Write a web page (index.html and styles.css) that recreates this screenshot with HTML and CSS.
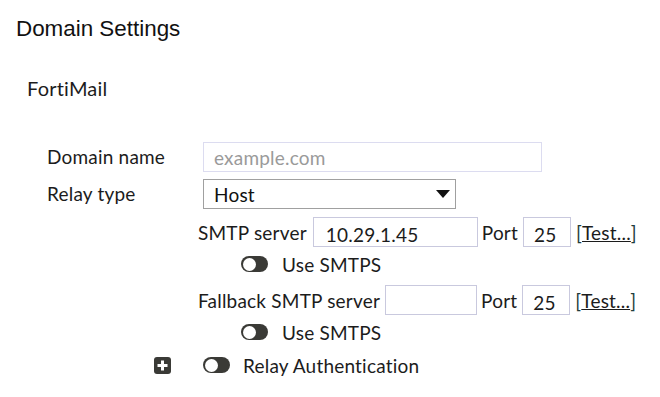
FILE: index.html
```html
<!DOCTYPE html>
<html lang="en">
<head>
    <meta charset="UTF-8">
    <title>Domain Settings</title>
    <link rel="stylesheet" href="styles.css">
</head>
<body>
<div class="page">
    <h1 class="title">Domain Settings</h1>
    <div class="product">FortiMail</div>

    <div class="form">
        <div class="row">
            <label class="label" for="domainName">Domain name</label>
            <input class="field wide" type="text" id="domainName" placeholder="example.com">
        </div>
        <div class="row row-select">
            <label class="label">Relay type</label>
            <div class="select">
                <span>Host</span>
                <svg width="14" height="8" viewBox="0 0 14 8"><path d="M0 0 H14 L7 8 Z" fill="#111"/></svg>
            </div>
        </div>

        <div class="relay">
            <div class="server-row">
                <span class="server-label">SMTP server</span>
                <input class="field host" type="text" value="10.29.1.45">
                <span class="port-label">Port</span>
                <input class="field port" type="text" value="25">
                <span class="test">[<a href="#">Test...</a>]</span>
            </div>
            <div class="toggle-row">
                <span class="toggle"></span>
                <span>Use SMTPS</span>
            </div>
            <div class="server-row">
                <span class="server-label fallback-label">Fallback SMTP server</span>
                <input class="field fallback" type="text" value="">
                <span class="port-label">Port</span>
                <input class="field port" type="text" value="25">
                <span class="test">[<a href="#">Test...</a>]</span>
            </div>
            <div class="toggle-row">
                <span class="toggle"></span>
                <span>Use SMTPS</span>
            </div>
        </div>

        <div class="auth-row">
            <span class="plus">
                <svg width="17" height="17" viewBox="0 0 17 17">
                    <rect width="17" height="17" rx="3" fill="#3a3a36"/>
                    <path d="M8.5 3.5 V13.5 M3.5 8.5 H13.5" stroke="#fff" stroke-width="3"/>
                </svg>
            </span>
            <span class="toggle"></span>
            <span>Relay Authentication</span>
        </div>
    </div>
</div>
</body>
</html>
```

FILE: styles.css
```css
body {
    margin: 0;
    background-color: #fff;
    font-family: Lato, 'Liberation Sans', sans-serif;
    font-size: 19px;
    letter-spacing: 0.2px;
    color: #1c1c1c;
}

.page {
    padding: 16px 0 0 16px;
}

.title {
    margin: 0;
    font-family: 'Liberation Sans', Arial, sans-serif;
    font-size: 22.4px;
    font-weight: normal;
    letter-spacing: 0;
    line-height: 25px;
    color: #111;
}

.product {
    margin: 35px 0 0 11px;
    font-size: 20px;
    line-height: 24px;
}

.form {
    margin: 42px 0 0 31px;
}

.row {
    display: flex;
    align-items: center;
    height: 30px;
}

.row-select {
    margin-top: 7px;
}

.label {
    width: 156px;
    line-height: 22px;
}

.field {
    box-sizing: border-box;
    height: 30px;
    margin: 0;
    padding: 4px 10px 0;
    border: 1px solid #c9c9de;
    border-radius: 0;
    font-family: Lato, 'Liberation Sans', sans-serif;
    font-size: 19px;
    letter-spacing: 0.2px;
    color: #1c1c1c;
    background-color: #fff;
    outline: none;
}

.field::placeholder {
    color: #9a9a9a;
}

.wide {
    width: 339px;
    border-color: #dcdcf0;
    padding-top: 0;
}

.select {
    box-sizing: border-box;
    width: 253px;
    height: 30px;
    display: flex;
    align-items: center;
    justify-content: space-between;
    padding: 0 5px 0 10px;
    border: 1px solid #a0a0a0;
    color: #111;
}

.relay {
    margin: 8px 0 0 151px;
}

.server-row {
    display: flex;
    align-items: center;
    height: 30px;
}

.server-label {
    margin-right: 6px;
}

.fallback-label {
    margin-right: 5px;
}

.host {
    width: 165px;
    padding-left: 12px;
}

.fallback {
    width: 92px;
}

.port-label {
    margin: 0 5px 0 4px;
}

.port {
    width: 48px;
}

.test {
    margin-left: 5px;
    color: #1f3d3d;
}

.test a {
    color: #1c1c1c;
}

.toggle-row {
    display: flex;
    align-items: center;
    gap: 14px;
    height: 24px;
    margin: 5px 0 9px 43px;
}

.toggle {
    position: relative;
    display: inline-block;
    width: 27px;
    height: 16px;
    border-radius: 8px;
    background-color: #3a3a36;
}

.toggle::before {
    content: '';
    position: absolute;
    top: 1.5px;
    left: 1.5px;
    width: 13px;
    height: 13px;
    border-radius: 50%;
    background-color: #fff;
}

.auth-row {
    display: flex;
    align-items: center;
    height: 24px;
    margin: 9px 0 0 107px;
}

.plus {
    display: inline-flex;
    margin-right: 32px;
}

.auth-row .toggle {
    margin-right: 13px;
}
```
